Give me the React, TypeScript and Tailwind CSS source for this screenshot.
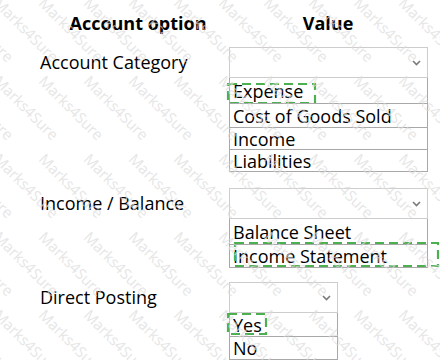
const marks: { x: number; y: number }[] = [];
for (let r = -2; r < 6; r++) {
  for (let c = -3; c < 11; c++) {
    marks.push({ x: c * 45 + 2, y: r * 78 - 5 });
  }
}

const Chevron = () => (
  <svg width="9" height="6" viewBox="0 0 9 6" className="mr-[6px]">
    <polyline points="1,1 4.5,4.5 8,1" fill="none" stroke="#7a7a7a" strokeWidth="1.6" />
  </svg>
);

const Dashed = ({ className }: { className: string }) => (
  <svg className={"absolute pointer-events-none overflow-visible " + className}>
    <rect
      x="1"
      y="1"
      width="calc(100% - 2px)"
      height="calc(100% - 2px)"
      fill="none"
      stroke="#4caf50"
      strokeWidth="2.2"
      strokeDasharray="9 5"
    />
  </svg>
);

type Option = { label: string; rowClass: string; mark?: string };

const Field = ({
  label,
  width,
  options,
  className,
}: {
  label: string;
  width: string;
  options: Option[];
  className: string;
}) => (
  <div className={"flex " + className}>
    <div className="w-[229px] pl-[40px] h-[31px] flex items-center">{label}</div>
    <div className={width}>
      <div className="h-[31px] border border-[#cdcdcd] flex items-center justify-end">
        <Chevron />
      </div>
      <div className="border-x border-b border-[#a8a8a8]">
        {options.map((o, i) => (
          <div
            key={o.label}
            className={
              "relative flex items-center pl-[3px] leading-none " +
              o.rowClass +
              (i > 0 ? " border-t border-[#a8a8a8]" : "")
            }
          >
            {o.label}
            {o.mark && <Dashed className={o.mark} />}
          </div>
        ))}
      </div>
    </div>
  </div>
);

export default function App() {
  return (
    <div className="relative w-[440px] h-[360px] overflow-hidden bg-white text-black text-[18px] font-['Open_Sans',sans-serif]">
      <div className="h-[47px] flex items-center font-bold">
        <div className="w-[276px] text-center">Account option</div>
        <div className="w-[104px] text-center">Value</div>
      </div>

      <Field
        label="Account Category"
        width="w-[199px]"
        className=""
        options={[
          { label: "Expense", rowClass: "h-[25px]", mark: "left-[-3px] top-[5px] w-[89px] h-[21px]" },
          { label: "Cost of Goods Sold", rowClass: "h-[24px]" },
          { label: "Income", rowClass: "h-[22px]" },
          { label: "Liabilities", rowClass: "h-[22px]" },
        ]}
      />

      <Field
        label="Income / Balance"
        width="w-[199px]"
        className="mt-[16px]"
        options={[
          { label: "Balance Sheet", rowClass: "h-[25px]" },
          { label: "Income Statement", rowClass: "h-[23px]", mark: "left-[4px] top-[-3px] w-[205px] h-[25px]" },
        ]}
      />

      <Field
        label="Direct Posting"
        width="w-[109px]"
        className="mt-[14px]"
        options={[
          { label: "Yes", rowClass: "h-[23px]", mark: "left-[-3px] top-[0px] w-[40px] h-[22px]" },
          { label: "No", rowClass: "h-[23px]" },
        ]}
      />

      <div className="absolute inset-0 pointer-events-none">
        {marks.map((m, i) => (
          <span
            key={i}
            className="absolute origin-top-left rotate-45 text-[15px] leading-none text-[#dcdcdc] font-['Open_Sans',sans-serif] whitespace-nowrap opacity-70"
            style={{ left: m.x, top: m.y }}
          >
            Marks4Sure
          </span>
        ))}
      </div>
    </div>
  );
}
